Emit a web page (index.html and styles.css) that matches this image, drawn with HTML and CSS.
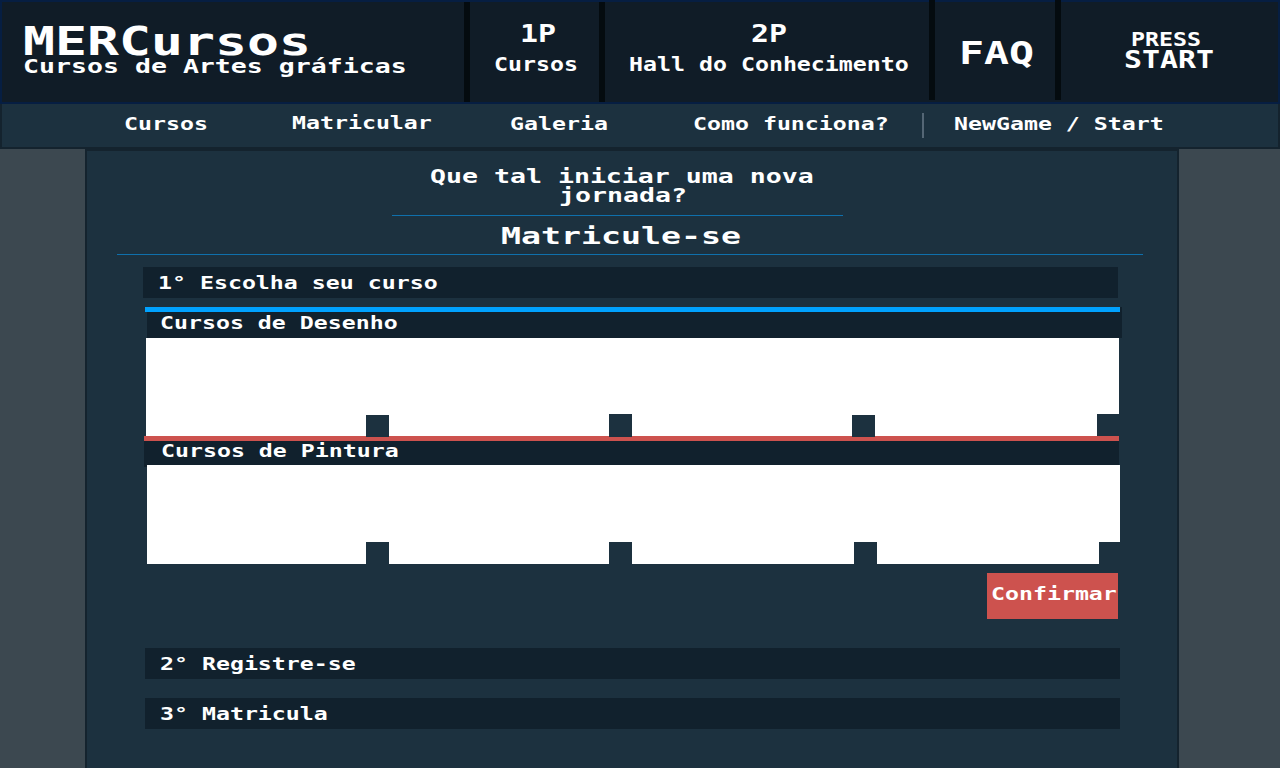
FILE: index.html
```
<!DOCTYPE html>
<html lang="pt-BR">
<head>
<meta charset="utf-8">
<title>MERCursos - Matricule-se</title>
<link rel="stylesheet" href="styles.css">
</head>
<body>
<header class="top">
  <div class="brand">
    <h1 class="t xl">MERCursos</h1>
    <p class="t md">Cursos de Artes gráficas</p>
  </div>
  <div class="player one">
    <span class="t tall">1P</span>
    <span class="t head">Cursos</span>
  </div>
  <div class="player two">
    <span class="t tall">2P</span>
    <span class="t head">Hall do Conhecimento</span>
  </div>
  <div class="faq raised"><span class="t big">FAQ</span></div>
  <div class="press raised">
    <span class="t head">PRESS</span>
    <span class="t tall">START</span>
  </div>
</header>
<nav class="menu">
  <a class="t sm m1">Cursos</a>
  <a class="t sm m2">Matricular</a>
  <a class="t sm m3">Galeria</a>
  <a class="t sm m4">Como funciona?</a>
  <i class="sep"></i>
  <a class="t sm m5">NewGame / Start</a>
</nav>
<main class="page">
  <div class="intro">
    <p class="t md">Que tal iniciar uma nova</p>
    <p class="t md second">jornada?</p>
  </div>
  <h2 class="title"><span class="t lg">Matricule-se</span></h2>
  <section class="bar first"><span class="t sm">1° Escolha seu curso</span></section>
  <section class="group drawing">
    <div class="stripe blue"></div>
    <div class="label"><span class="t sm">Cursos de Desenho</span></div>
    <div class="cards">
      <div class="card"><i class="notch"></i></div>
      <div class="card"><i class="notch up"></i></div>
      <div class="card"><i class="notch"></i></div>
      <div class="card"><i class="notch last"></i></div>
    </div>
  </section>
  <section class="group painting">
    <div class="stripe red"></div>
    <div class="label"><span class="t sm">Cursos de Pintura</span></div>
    <div class="cards">
      <div class="card"><i class="notch"></i></div>
      <div class="card"><i class="notch"></i></div>
      <div class="card"><i class="notch"></i></div>
      <div class="card"><i class="notch last"></i></div>
    </div>
  </section>
  <button class="confirm"><span class="t sm">Confirmar</span></button>
  <section class="bar second-step"><span class="t sm">2° Registre-se</span></section>
  <section class="bar third-step"><span class="t sm">3° Matricula</span></section>
</main>
</body>
</html>
```
FILE: styles.css
```
* { box-sizing: border-box; margin: 0; padding: 0; }
body {
  width: 1280px;
  height: 768px;
  overflow: hidden;
  background: #3c4850;
  color: #fff;
  font-family: "DejaVu Sans Mono", "Liberation Mono", monospace;
}

/* Wide arcade lettering */
.t {
  display: block;
  width: max-content;
  font-weight: 700;
  line-height: 1;
  white-space: pre;
  transform-origin: 0 0;
}
.xl { font-size: 38.4px; transform: scaleX(1.384); }
.big { font-size: 31.5px; transform: scaleX(1.318); }
.tall { font-size: 24.6px; transform: scaleX(1.215); }
.lg { font-size: 23.3px; transform: scaleX(1.426); }
.md { font-size: 19.2px; transform: scaleX(1.384); }
.head { font-size: 19.2px; transform: scaleX(1.211); }
.sm { font-size: 17.8px; transform: scaleX(1.306); }

.top {
  display: flex;
  height: 104px;
  background: #101c27;
  border: 2px solid #061e42;
}
.brand { width: 462px; padding: 21px 0 0 21px; }
.brand .md { margin-top: -4px; }
.player { border-left: 6px solid #040b0f; }
.one { width: 135px; padding: 20px 0 0 24px; }
.one .tall { margin-left: 26px; }
.two { width: 330px; padding: 20px 0 0 24px; }
.two .tall { margin-left: 122px; }
.player .head { margin-top: 8px; }
.raised { margin: -2px 0 2px; border-left: 6px solid #040b0f; }
.faq { width: 126px; padding: 38px 0 0 24px; }
.press { flex: 1; padding: 30px 0 0 63px; }
.press .head { margin-left: 7px; }
.press .tall { margin-top: -1px; }

.menu {
  display: grid;
  grid-template-columns: 168px 218px 183px 229px 32px 1fr;
  height: 45px;
  padding: 11px 0 0 122px;
  background: #1c313f;
  border: solid #14232e;
  border-width: 0 2px 2px;
}
.m2 { margin-top: -1px; }
.sep { width: 2px; height: 25px; margin-top: -2px; background: #546675; }

.page {
  width: 1094px;
  height: 619px;
  margin-left: 85px;
  padding: 16px 0 0;
  background: #1c313f;
  border: 2px solid #14232e;
  border-bottom: 0;
}
.intro {
  width: 451px;
  height: 49px;
  margin-left: 305px;
  padding-left: 38px;
  border-bottom: 1px solid #0f70ac;
}
.intro .second { margin-left: 129px; }
.title {
  width: 1026px;
  height: 39px;
  margin-left: 30px;
  padding: 8px 0 0 384px;
  border-bottom: 1px solid #0f70ac;
}
.bar {
  width: 975px;
  height: 31px;
  margin-left: 58px;
  padding: 7px 0 0 15px;
  background: #11212d;
}
.first { margin: 12px 0 9px 56px; padding-left: 15px; }

.drawing { width: 977px; height: 129px; margin-left: 58px; }
.drawing .stripe { width: 975px; box-shadow: 2px 0 #11212d; }
.drawing .label { width: 975px; height: 26px; margin-left: 2px; padding: 2px 0 0 13px; }
.label { background: #11212d; }
.stripe { height: 5px; }
.blue { background: #00a2ff; }
.red { background: #cd524e; }
.cards { display: grid; }
.drawing .cards { width: 973px; height: 98px; margin-left: 1px; grid-template-columns: 243px 243px 243px 244px; }
.card { display: flex; justify-content: flex-end; align-items: flex-end; background: #fff; }
.notch { position: relative; z-index: 1; width: 23px; height: 22px; background: #1c313f; }
.drawing .notch { margin-bottom: -1px; }
.drawing .up { height: 23px; }
.drawing .last { width: 22px; margin-bottom: 0; }

.painting { width: 976px; margin-left: 57px; }
.painting .stripe { width: 975px; }
.painting .label { width: 975px; height: 26px; padding: 1px 0 0 17px; }
.painting .cards { position: relative; width: 973px; height: 99px; margin: -2px 0 0 3px; grid-template-columns: 242px 243px 245px 243px; }
.painting .last { width: 21px; }

.confirm {
  display: block;
  width: 131px;
  height: 46px;
  margin: 9px 0 29px 900px;
  padding: 0 0 4px 4px;
  border: 0;
  background: #cd524e;
  color: #fff;
  font-family: inherit;
}
.second-step { margin-bottom: 19px; }
```
